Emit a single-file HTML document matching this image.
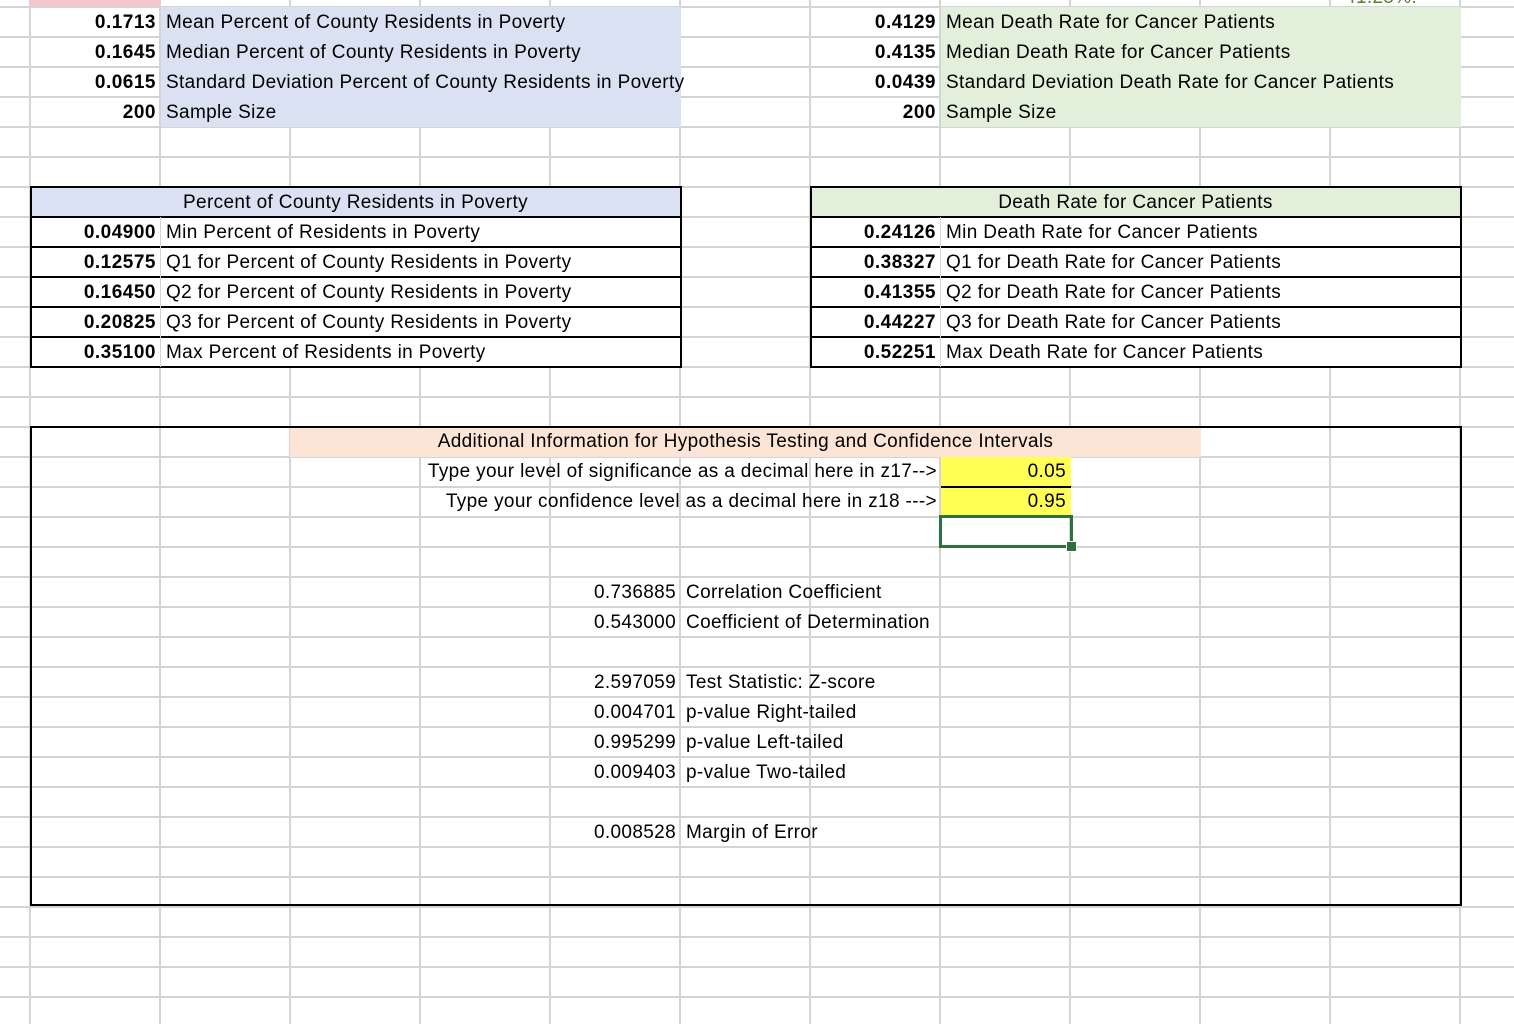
<!DOCTYPE html>
<html><head><meta charset="utf-8"><style>
html,body{margin:0;padding:0;}
body{width:1514px;height:1024px;position:relative;overflow:hidden;background:#fff;
font-family:"Liberation Sans",Arial,sans-serif;font-size:19px;color:#000;}
.grid{position:absolute;left:0;top:0;width:1514px;height:1024px;
background-image:linear-gradient(to right,#d4d4d4 0,#d4d4d4 2px,transparent 2px),linear-gradient(to bottom,#d4d4d4 0,#d4d4d4 2px,transparent 2px);
background-size:130px 1024px,1514px 30px;background-position:29px 0,0 6px;}
.f{position:absolute;}
.t{position:absolute;height:30px;line-height:31px;white-space:nowrap;letter-spacing:0.35px;}
.r{text-align:right;}
.b{font-weight:bold;letter-spacing:0.5px;}
.box{position:absolute;border:2px solid #000;box-sizing:border-box;}
.hl{position:absolute;height:2px;background:#000;}
</style></head><body>
<div class="grid"></div>
<div class="f" style="left:30px;top:0;width:131px;height:6px;background:#f4c7d0"></div>
<div class="t" style="left:1345px;top:-18px;color:#548235">41.25%.</div>

<div class="f" style="left:161px;top:7px;width:520px;height:120px;background:#d9e1f2"></div>
<div class="f" style="left:941px;top:7px;width:520px;height:120px;background:#e2efda"></div>

<div class="t r b" style="left:30px;width:126px;top:7px">0.1713</div>
<div class="t" style="left:166px;top:7px">Mean Percent of County Residents in Poverty</div>
<div class="t r b" style="left:30px;width:126px;top:37px">0.1645</div>
<div class="t" style="left:166px;top:37px">Median Percent of County Residents in Poverty</div>
<div class="t r b" style="left:30px;width:126px;top:67px">0.0615</div>
<div class="t" style="left:166px;top:67px">Standard Deviation Percent of County Residents in Poverty</div>
<div class="t r b" style="left:30px;width:126px;top:97px">200</div>
<div class="t" style="left:166px;top:97px">Sample Size</div>

<div class="t r b" style="left:810px;width:126px;top:7px">0.4129</div>
<div class="t" style="left:946px;top:7px">Mean Death Rate for Cancer Patients</div>
<div class="t r b" style="left:810px;width:126px;top:37px">0.4135</div>
<div class="t" style="left:946px;top:37px">Median Death Rate for Cancer Patients</div>
<div class="t r b" style="left:810px;width:126px;top:67px">0.0439</div>
<div class="t" style="left:946px;top:67px">Standard Deviation Death Rate for Cancer Patients</div>
<div class="t r b" style="left:810px;width:126px;top:97px">200</div>
<div class="t" style="left:946px;top:97px">Sample Size</div>

<div class="f" style="left:30px;top:187px;width:651px;height:30px;background:#d9e1f2"></div>
<div class="f" style="left:31px;top:217px;width:649px;height:150px;background:#fff"></div>
<div class="f" style="left:811px;top:187px;width:650px;height:30px;background:#e2efda"></div>
<div class="f" style="left:811px;top:217px;width:649px;height:150px;background:#fff"></div>
<div class="box" style="left:30px;top:186px;width:652px;height:182px"></div>
<div class="box" style="left:810px;top:186px;width:652px;height:182px"></div>
<div class="hl" style="left:30px;width:652px;top:216px"></div>
<div class="hl" style="left:30px;width:652px;top:246px"></div>
<div class="hl" style="left:30px;width:652px;top:276px"></div>
<div class="hl" style="left:30px;width:652px;top:306px"></div>
<div class="hl" style="left:30px;width:652px;top:336px"></div>
<div class="hl" style="left:810px;width:652px;top:216px"></div>
<div class="hl" style="left:810px;width:652px;top:246px"></div>
<div class="hl" style="left:810px;width:652px;top:276px"></div>
<div class="hl" style="left:810px;width:652px;top:306px"></div>
<div class="hl" style="left:810px;width:652px;top:336px"></div>
<div class="f" style="left:160px;top:217px;width:1px;height:150px;background:#d4d4d4"></div>
<div class="f" style="left:940px;top:217px;width:1px;height:150px;background:#d4d4d4"></div>

<div class="t" style="left:30px;width:651px;text-align:center;top:187px">Percent of County Residents in Poverty</div>
<div class="t r b" style="left:30px;width:126px;top:217px">0.04900</div>
<div class="t" style="left:166px;top:217px">Min Percent of Residents in Poverty</div>
<div class="t r b" style="left:30px;width:126px;top:247px">0.12575</div>
<div class="t" style="left:166px;top:247px">Q1 for Percent of County Residents in Poverty</div>
<div class="t r b" style="left:30px;width:126px;top:277px">0.16450</div>
<div class="t" style="left:166px;top:277px">Q2 for Percent of County Residents in Poverty</div>
<div class="t r b" style="left:30px;width:126px;top:307px">0.20825</div>
<div class="t" style="left:166px;top:307px">Q3 for Percent of County Residents in Poverty</div>
<div class="t r b" style="left:30px;width:126px;top:337px">0.35100</div>
<div class="t" style="left:166px;top:337px">Max Percent of Residents in Poverty</div>

<div class="t" style="left:810px;width:651px;text-align:center;top:187px">Death Rate for Cancer Patients</div>
<div class="t r b" style="left:810px;width:126px;top:217px">0.24126</div>
<div class="t" style="left:946px;top:217px">Min Death Rate for Cancer Patients</div>
<div class="t r b" style="left:810px;width:126px;top:247px">0.38327</div>
<div class="t" style="left:946px;top:247px">Q1 for Death Rate for Cancer Patients</div>
<div class="t r b" style="left:810px;width:126px;top:277px">0.41355</div>
<div class="t" style="left:946px;top:277px">Q2 for Death Rate for Cancer Patients</div>
<div class="t r b" style="left:810px;width:126px;top:307px">0.44227</div>
<div class="t" style="left:946px;top:307px">Q3 for Death Rate for Cancer Patients</div>
<div class="t r b" style="left:810px;width:126px;top:337px">0.52251</div>
<div class="t" style="left:946px;top:337px">Max Death Rate for Cancer Patients</div>

<div class="box" style="left:30px;top:426px;width:1432px;height:480px"></div>
<div class="f" style="left:290px;top:428px;width:911px;height:29px;background:#fce4d6"></div>
<div class="f" style="left:941px;top:457px;width:130px;height:60px;background:#ffff55"></div>
<div class="hl" style="left:941px;width:130px;top:486px"></div>
<div class="f" style="left:939px;top:515px;width:134px;height:33px;border:3px solid #2f6f40;box-sizing:border-box"></div>
<div class="f" style="left:1066px;top:541px;width:9px;height:9px;background:#2f6f40;border:1px solid #fff"></div>

<div class="t" style="left:290px;width:911px;text-align:center;top:426px">Additional Information for Hypothesis Testing and Confidence Intervals</div>
<div class="t r" style="left:200px;width:737px;top:456px">Type your level of significance as a decimal here in z17--&gt;</div>
<div class="t r" style="left:200px;width:737px;top:486px">Type your confidence level as a decimal here in z18 ---&gt;</div>
<div class="t r" style="left:940px;width:126px;top:456px">0.05</div>
<div class="t r" style="left:940px;width:126px;top:486px">0.95</div>

<div class="t r" style="left:550px;width:126px;top:577px">0.736885</div>
<div class="t" style="left:686px;top:577px">Correlation Coefficient</div>
<div class="t r" style="left:550px;width:126px;top:607px">0.543000</div>
<div class="t" style="left:686px;top:607px">Coefficient of Determination</div>
<div class="t r" style="left:550px;width:126px;top:667px">2.597059</div>
<div class="t" style="left:686px;top:667px">Test Statistic: Z-score</div>
<div class="t r" style="left:550px;width:126px;top:697px">0.004701</div>
<div class="t" style="left:686px;top:697px">p-value Right-tailed</div>
<div class="t r" style="left:550px;width:126px;top:727px">0.995299</div>
<div class="t" style="left:686px;top:727px">p-value Left-tailed</div>
<div class="t r" style="left:550px;width:126px;top:757px">0.009403</div>
<div class="t" style="left:686px;top:757px">p-value Two-tailed</div>
<div class="t r" style="left:550px;width:126px;top:817px">0.008528</div>
<div class="t" style="left:686px;top:817px">Margin of Error</div>
</body></html>
